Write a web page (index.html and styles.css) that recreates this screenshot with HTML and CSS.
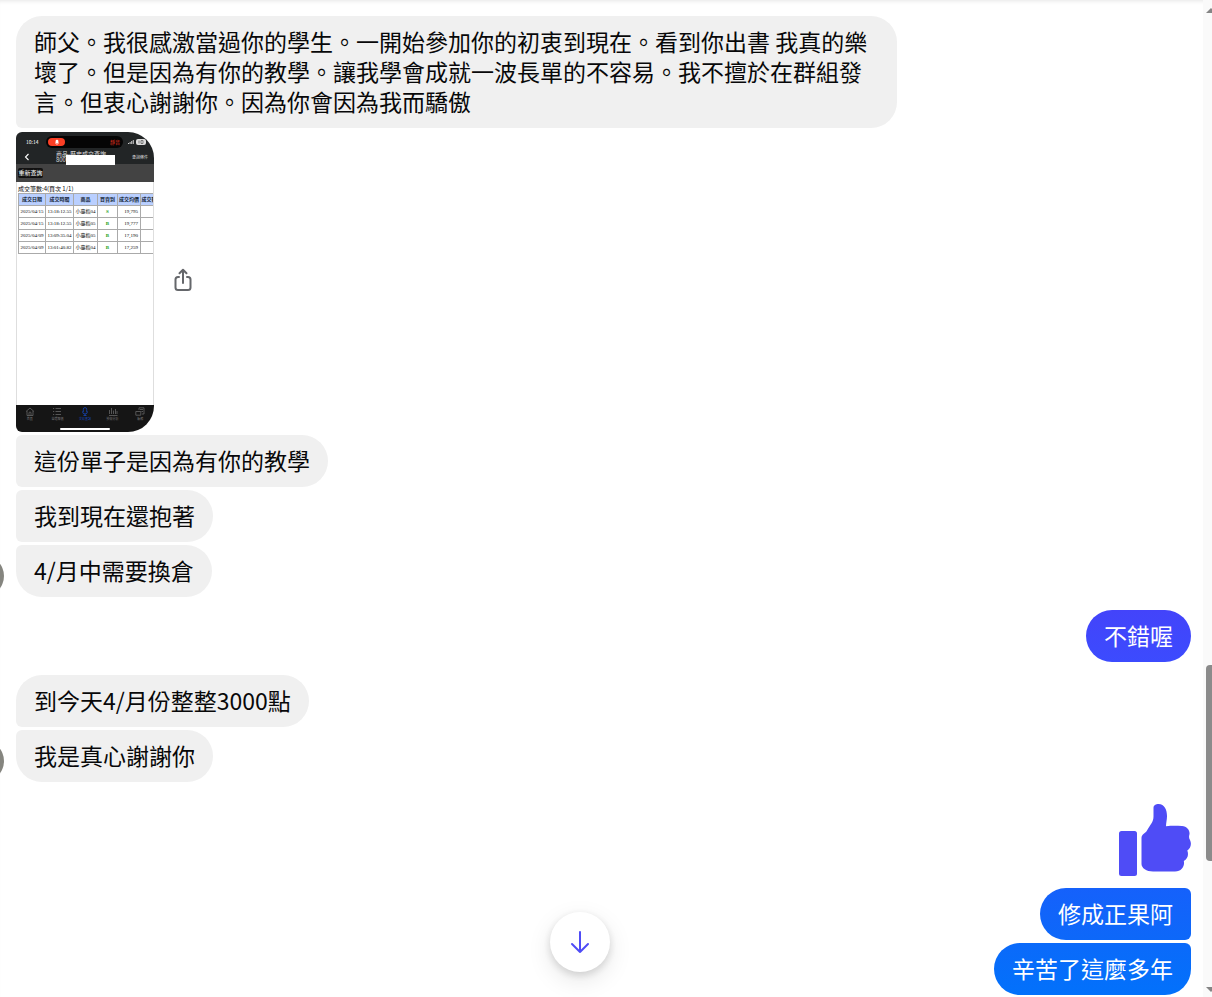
FILE: index.html
```html
<!DOCTYPE html>
<html lang="zh-Hant">
<head>
    <meta charset="UTF-8">
    <meta name="viewport" content="width=device-width, initial-scale=1.0">
    <title>聊天</title>
    <link rel="stylesheet" href="styles.css">
</head>
<body>
    <main class="chat">
        <!-- Received -->
        <div class="group received">
            <div class="bubble first">師父。我很感激當過你的學生。一開始參加你的初衷到現在。看到你出書 我真的樂壞了。但是因為有你的教學。讓我學會成就一波長單的不容易。我不擅於在群組發言。但衷心謝謝你。因為你會因為我而驕傲</div>
            <div class="photo-row">
                <div class="phone">
                    <div class="phone-status">
                        <span class="phone-time">10:14</span>
                        <span class="island">
                            <span class="island-pill">
                                <svg width="6" height="6" viewBox="0 0 6 6"><path d="M1 4.5h4L4.4 3.5V2.2a1.4 1.4 0 0 0-2.8 0v1.3zM2.5 5h1v.7h-1z" fill="#fff"/></svg>
                            </span>
                            <span class="island-text">靜音</span>
                        </span>
                        <svg width="20" height="8" viewBox="0 0 20 8">
                            <path d="M0 6V5h1v1zM1.6 6V4h1v2zM3.2 6V3h1v3zM4.8 6V2h1v4z" fill="#ccc"/>
                            <rect x="8" y="1" width="10" height="6" rx="2" fill="#ddd"/>
                            <path d="M11 2.5v3M13 2.5h2v3h-2z" stroke="#555" stroke-width="0.7" fill="none"/>
                        </svg>
                    </div>
                    <div class="phone-nav">
                        <svg width="6" height="8" viewBox="0 0 6 8"><path d="M4.5 1 1.5 4l3 3" fill="none" stroke="#fff" stroke-width="1.1"/></svg>
                        <div class="phone-title">商品-歷史成交查詢<br>800<span class="redacted"></span></div>
                        <span class="phone-link">查詢條件</span>
                    </div>
                    <div class="phone-tools"><button class="phone-btn" type="button">重新查詢</button></div>
                    <div class="phone-body">
                        <div class="phone-count">成交筆數:4(頁次 1/1)</div>
                        <table class="deals">
                            <colgroup>
                                <col class="col-date"><col class="col-time"><col class="col-name"><col class="col-side"><col class="col-price"><col class="col-qty">
                            </colgroup>
                            <thead>
                                <tr><th>成交日期</th><th>成交時間</th><th>商品</th><th>買賣別</th><th>成交均價</th><th>成交數</th></tr>
                            </thead>
                            <tbody>
                                <tr><td>2025/04/15</td><td>13:18:12.55</td><td>小臺指04</td><td class="side">S</td><td class="num">19,795</td><td></td></tr>
                                <tr><td>2025/04/15</td><td>13:18:12.55</td><td>小臺指05</td><td class="side">B</td><td class="num">19,777</td><td></td></tr>
                                <tr><td>2025/04/09</td><td>13:09:35.04</td><td>小臺指05</td><td class="side">B</td><td class="num">17,190</td><td></td></tr>
                                <tr><td>2025/04/09</td><td>13:01:40.82</td><td>小臺指04</td><td class="side">B</td><td class="num">17,259</td><td></td></tr>
                            </tbody>
                        </table>
                    </div>
                    <div class="phone-tabs">
                        <div class="tab">
                            <svg width="10" height="9" viewBox="0 0 10 9"><path d="M1 4.5 5 1l4 3.500M2 4v4.500h6V4M4 8.500V6a1 1 0 0 1 2 0v2.500"/></svg>
                            <span>首頁</span>
                        </div>
                        <div class="tab">
                            <svg width="10" height="9" viewBox="0 0 10 9"><path d="M1 1.500h1.200M1 4.500h1.200M1 7.500h1.200M3.500 1.500H9M3.500 4.500H9M3.500 7.500H9"/></svg>
                            <span>自選報價</span>
                        </div>
                        <div class="tab active">
                            <svg width="10" height="9" viewBox="0 0 10 9"><path d="M3.300 5V2.300a1.700 1.700 0 0 1 3.400 0V5M2.500 4.500a2.500 2.500 0 0 0 5 0M5 7v1.500M3.500 8.500h3"/></svg>
                            <span>交易查詢</span>
                        </div>
                        <div class="tab">
                            <svg width="10" height="9" viewBox="0 0 10 9"><path d="M1.500 7V3M3.500 7V1M5.500 7V3.500M7.500 7V2M9 7V4M1 8.500h8.500"/></svg>
                            <span>技術分析</span>
                        </div>
                        <div class="tab">
                            <svg width="10" height="9" viewBox="0 0 10 9"><path d="M4 3V.8h5V7H7M.8 4.500h5v3.700h-5zM5 2.500h3M6.500 4.500H8"/></svg>
                            <span>帳務</span>
                        </div>
                    </div>
                    <div class="home-bar"></div>
                </div>
                <button class="share" type="button" aria-label="分享">
                    <svg width="18" height="24" viewBox="0 0 18 24" fill="none" stroke="#65676b" stroke-width="2" stroke-linecap="round" stroke-linejoin="round">
                        <path d="M5 9H4a2.500 2.500 0 0 0-2.500 2.500v8A2.500 2.500 0 0 0 4 22h10a2.500 2.500 0 0 0 2.500-2.500v-8A2.500 2.500 0 0 0 14 9h-1M9 15V2M5.500 5.200 9 1.700l3.500 3.500"/>
                    </svg>
                </button>
            </div>
            <div class="bubble middle">這份單子是因為有你的教學</div>
            <div class="bubble middle">我到現在還抱著</div>
            <div class="bubble last">4/月中需要換倉<span class="avatar"></span></div>
        </div>

        <!-- Sent -->
        <div class="group sent">
            <div class="bubble violet">不錯喔</div>
        </div>

        <div class="group received">
            <div class="bubble first">到今天4/月份整整3000點</div>
            <div class="bubble last">我是真心謝謝你<span class="avatar"></span></div>
        </div>

        <div class="group sent like">
            <svg width="72" height="72" viewBox="0 0 72 72" fill="#4f4cf6" role="img" aria-label="讚">
                <rect x="0" y="27" width="18" height="45" rx="2.500"/>
                <path d="M22.500 34C22.500 30 26 30 28 26.500C31 21 34.500 18 34.500 12.500V4C34.500 1 37 0 39.500 0C45.500 0 48 6 48 12C48 16 47 18.500 47 22.300C53 21.500 57 21.700 63 22C68.500 22.300 71.500 27 70.300 31C69.800 33 70 34.500 71 36C73 40 71.500 44.500 68.300 46.500C70 50.500 68.500 55 64.800 57C66 61.500 63 67.500 56 67.500H34C27.500 67.500 22.500 64 22.500 60Z"/>
            </svg>
        </div>

        <div class="group sent pair">
            <div class="bubble first blue">修成正果阿</div>
            <div class="bubble last azure">辛苦了這麼多年</div>
        </div>
    </main>

    <div class="scrollbar">
        <span class="arrow up"></span>
        <span class="thumb"></span>
        <span class="arrow down"></span>
    </div>

    <button class="to-bottom" type="button" aria-label="捲動到最新訊息">
        <svg width="20" height="24" viewBox="0 0 20 24" fill="none" stroke="#4f4cf6" stroke-width="2" stroke-linecap="round" stroke-linejoin="round"><path d="M10 2v20M2 14l8 8 8-8"/></svg>
    </button>
</body>
</html>
```
FILE: styles.css
```css
* {
    box-sizing: border-box;
}

body {
    margin: 0;
    display: flex;
    min-height: 100vh;
    background: #fff;
    color: #080809;
    font-family: "Noto Sans CJK TC", sans-serif;
    font-size: 23px;
    line-height: 30px;
    box-shadow: inset 0 4px 4px -3px rgba(0, 0, 0, 0.1);
}

button {
    border: 0;
    padding: 0;
    background: none;
    font-family: inherit;
}

svg {
    display: block;
}

.chat {
    flex: 1;
    min-width: 0;
    padding: 16px 12px 2px 16px;
    display: flex;
    flex-direction: column;
    gap: 13px;
    overflow-x: clip;
}

/* Message groups */
.group {
    display: flex;
    flex-direction: column;
    align-items: flex-start;
    gap: 3px;
}

.sent {
    align-items: flex-end;
}

.like {
    margin-top: 9px;
}

.pair {
    margin-top: -1px;
}

.bubble {
    position: relative;
    max-width: 75%;
    padding: 10px 18px 12px;
    border-radius: 26px;
    background: #f0f0f0;
}

.received .first {
    border-bottom-left-radius: 6px;
}

.received .middle {
    border-radius: 6px 26px 26px 6px;
}

.received .last {
    border-top-left-radius: 6px;
}

.sent .bubble {
    color: #fff;
}

.sent .first {
    border-radius: 26px 6px 6px 26px;
}

.sent .last {
    border-top-right-radius: 6px;
}

.sent .violet {
    background: linear-gradient(#4344fa, #3c4bfe);
}

.sent .blue {
    background: linear-gradient(#1561fb, #0d68f9);
}

.sent .azure {
    background: linear-gradient(#0b6afa, #0271fb);
}

.avatar {
    position: absolute;
    left: -54px;
    bottom: 0;
    width: 42px;
    height: 42px;
    border-radius: 50%;
    background: #85857f;
}

/* Shared photo */
.photo-row {
    display: flex;
    align-items: center;
    gap: 20px;
    margin-top: 1px;
}

.phone {
    width: 138px;
    height: 300px;
    display: flex;
    flex-direction: column;
    position: relative;
    border-radius: 6px 26px 26px 6px;
    overflow: hidden;
    background: #fff;
    font-size: 5px;
    line-height: 6px;
}

.phone-status {
    display: flex;
    align-items: center;
    height: 18px;
    padding: 2px 6px 0 10px;
    gap: 5px;
    background: #222526;
    color: #fff;
}

.phone-time {
    width: 15px;
}

.island {
    display: flex;
    align-items: center;
    justify-content: space-between;
    width: 77px;
    height: 12px;
    padding: 0 3px 0 2px;
    border-radius: 6px;
    background: #050505;
    color: #e8321f;
}

.island-pill {
    display: flex;
    align-items: center;
    justify-content: center;
    width: 17px;
    height: 8px;
    border-radius: 4px;
    background: #fb3f25;
}

.phone-nav {
    display: flex;
    align-items: center;
    justify-content: space-between;
    height: 14px;
    padding: 0 6px 0 8px;
    background: #222526;
    color: #ddd;
}

.phone-title {
    position: relative;
    font-size: 6px;
}

.redacted {
    position: absolute;
    left: 10px;
    top: 4px;
    width: 49px;
    height: 10px;
    background: #fff;
}

.phone-link {
    font-size: 4px;
}

.phone-tools {
    height: 18px;
    padding: 4px 2px;
    background: #434343;
}

.phone-btn {
    display: block;
    width: 25px;
    height: 10px;
    border-radius: 2px;
    background: #111;
    color: #fff;
    font-size: 6px;
    line-height: 8px;
}

.phone-body {
    flex: 1;
    padding: 3px 0 0 1px;
    border: 1px solid #dedede;
    border-width: 0 1px;
    overflow: hidden;
}

.phone-count {
    height: 8px;
    font-size: 6px;
    line-height: 8px;
    white-space: nowrap;
}

.deals {
    width: 140px;
    table-layout: fixed;
    border-collapse: collapse;
    font-family: "Liberation Serif", "Noto Sans CJK TC", serif;
    font-size: 5px;
    line-height: 6px;
}

.deals th,
.deals td {
    height: 12px;
    padding: 0;
    border: 1px solid #aaa;
    text-align: center;
    white-space: nowrap;
    overflow: hidden;
}

.deals th {
    background: #b9cfff;
    color: #123;
}

.deals .side {
    color: #22a022;
    font-weight: bold;
}

.deals .num {
    padding-right: 2px;
    text-align: right;
}

.col-date {
    width: 27px;
}

.col-time {
    width: 28px;
}

.col-name {
    width: 24px;
}

.col-side {
    width: 20px;
}

.col-price {
    width: 23px;
}

.phone-tabs {
    display: flex;
    height: 27px;
    padding-top: 2px;
    background: #151515;
    color: #777;
    font-size: 3px;
    line-height: 4px;
}

.tab {
    flex: 1;
    display: flex;
    flex-direction: column;
    align-items: center;
    gap: 1px;
}

.tab svg {
    fill: none;
    stroke: #666;
    stroke-width: 0.8;
}

.active {
    color: #1546bd;
}

.tab.active svg {
    stroke: #1546bd;
}

.home-bar {
    position: absolute;
    left: 44px;
    bottom: 2px;
    width: 50px;
    height: 2px;
    border-radius: 1px;
    background: #fff;
}

.share {
    padding-bottom: 4px;
    cursor: pointer;
}

/* Scrollbar */
.scrollbar {
    position: relative;
    width: 9px;
    background: #fafafa;
    overflow: hidden;
}

.thumb {
    position: absolute;
    left: 3px;
    top: 66.7%;
    width: 12px;
    height: 19.7%;
    border-radius: 4px;
    background: #8b8b8b;
}

.arrow {
    position: absolute;
    left: 3px;
    border: 5px solid transparent;
}

.up {
    top: 3px;
    border-bottom-color: #858585;
}

.down {
    bottom: 0;
    border-top-color: #858585;
}

.to-bottom {
    position: fixed;
    left: calc(50% - 56px);
    bottom: 25px;
    display: flex;
    align-items: center;
    justify-content: center;
    width: 60px;
    height: 60px;
    border-radius: 50%;
    background: #fff;
    box-shadow: 0 3px 8px rgba(0, 0, 0, 0.14), 0 8px 24px rgba(0, 0, 0, 0.1);
    cursor: pointer;
}
```
